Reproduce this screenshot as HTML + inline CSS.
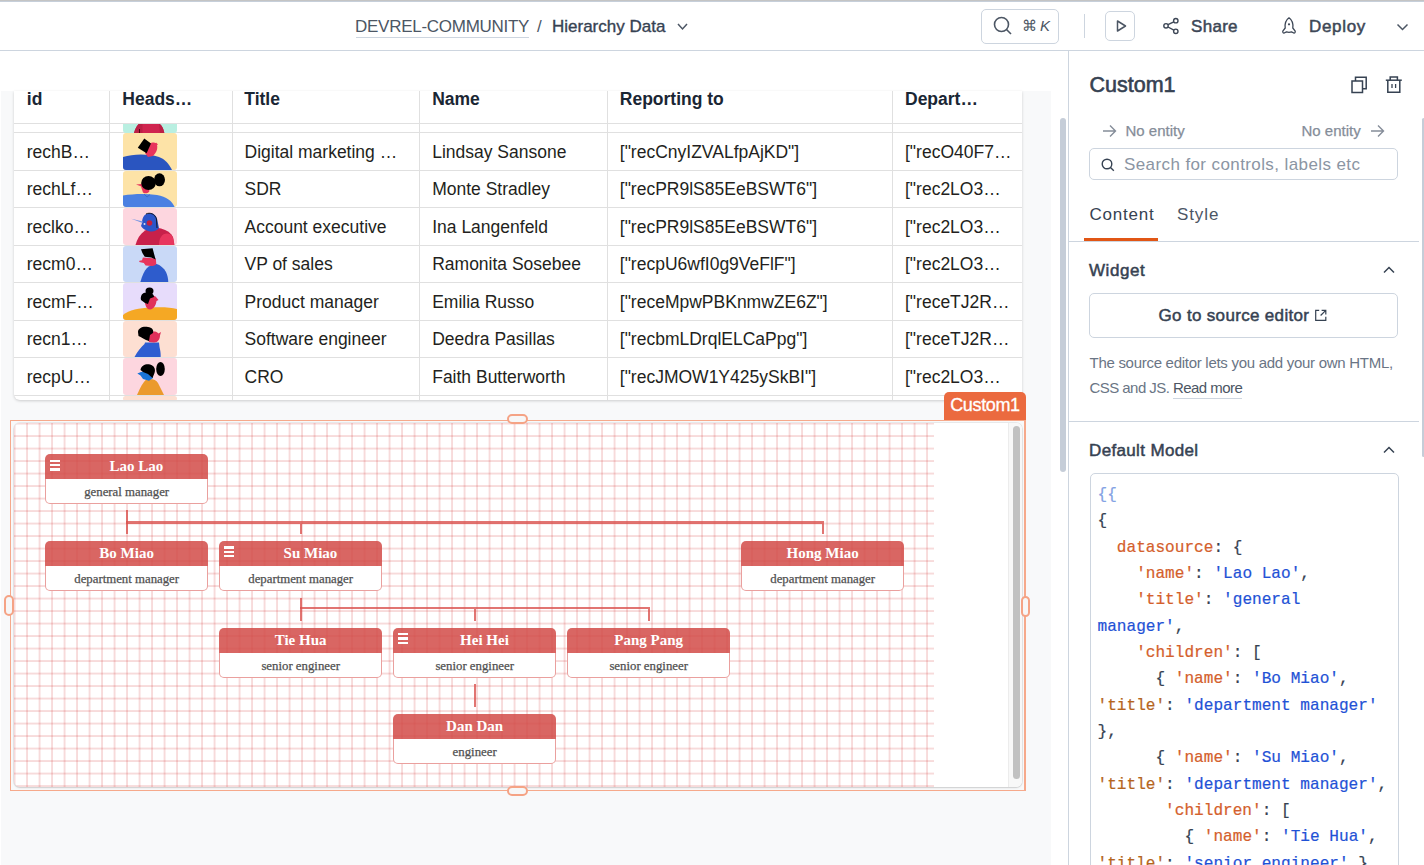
<!DOCTYPE html>
<html><head><meta charset="utf-8">
<style>
*{box-sizing:border-box;margin:0;padding:0}
html,body{width:1424px;height:865px;overflow:hidden;background:#fff;font-family:"Liberation Sans",sans-serif;}
.abs{position:absolute}
#topline{left:0;top:0;width:1424px;height:2px;background:linear-gradient(#c4c4c4 0,#c4c4c4 1px,#c6cfda 1px)}
#topbar{left:0;top:2px;width:1424px;height:49px;border-bottom:1px solid #cdd5df;background:#fff}
.tb{position:absolute;white-space:nowrap;color:#4c5664}
#canvas{left:1px;top:91px;width:1050px;height:774px;background:#f8f9fa}
#panel{left:1068px;top:51px;width:356px;height:814px;border-left:1px solid #cdd5df;background:#fff}
/* table */
#table{left:14px;top:91px;width:1008px;height:309px;background:#fff;border-radius:0 0 6px 6px;box-shadow:0 1px 3px rgba(0,0,0,.18);overflow:hidden}
.th{position:absolute;top:-2px;font-weight:bold;font-size:17.5px;color:#1a2634;white-space:nowrap}
.vl{position:absolute;top:0;width:1px;height:309px;background:#e0e0e0}
.hl{position:absolute;left:0;width:1008px;height:1px;background:#e0e0e0}
.td{position:absolute;font-size:17.5px;color:#231f20;white-space:nowrap}
.av{position:absolute;left:109px;width:54px;border-radius:3px;overflow:hidden}
.av svg,svg{display:block}

.sl{background:#f6a98b}
#wgt{left:14.4px;top:422.6px;width:1008px;height:364.6px;border-radius:6px;background:#fff;box-shadow:0 0 0 1px rgba(0,0,0,0.06),0 1px 2px rgba(0,0,0,0.12);overflow:hidden}
#grid{left:0;top:0.6px;width:920px;height:366px;background-image:linear-gradient(90deg,rgba(200,0,0,.14) 2px,rgba(0,0,0,0) 2px),linear-gradient(rgba(200,0,0,.14) 2px,rgba(0,0,0,0) 2px);background-size:12.5px 12.5px;background-position:-0.4px -0.4px}
#sbtrack{left:993.7px;top:0;width:14.3px;height:366px;background:#f8f8f8;border-left:1px solid #ececec}
#sbthumb{left:998.5px;top:3.6px;width:7.4px;height:352.6px;background:#c1c1c1;border-radius:4px}
.nd{position:absolute;width:162.5px;height:50px}
.nt{position:absolute;left:0;top:0;width:162.5px;height:25px;background:rgba(210,75,72,0.85);border-radius:5px 5px 0 0;color:#fff;font-family:"Liberation Serif",serif;font-weight:bold;font-size:15px;line-height:25px;text-align:center;white-space:nowrap}
.nt.m{padding-left:19.6px}
.nc{position:absolute;left:0;top:25px;width:162.5px;height:25px;background:#fff;border:1.5px solid rgba(217,83,79,0.55);border-top:none;border-radius:0 0 5px 5px;color:#333;font-family:"Liberation Serif",serif;font-size:12.8px;line-height:26.5px;text-align:center;white-space:nowrap;color:#505050;-webkit-text-stroke:0.25px #505050}
.mn{position:absolute;left:4.7px;top:5.5px;width:10.2px;height:11px}
.mn i{position:absolute;left:0;width:10.2px;height:2.2px;background:#fff}
.cl{position:absolute;background:rgba(217,83,79,0.8)}
.hdl{position:absolute;border:2px solid #f5a385;background:#f7f7f7;border-radius:6px}
.ctag{left:944px;top:391.8px;width:82px;height:28px;background:#eb6a3f;border-radius:5px 5px 0 0;color:#fff;font-size:18px;line-height:27.5px;text-align:center;letter-spacing:-0.35px;-webkit-text-stroke:0.3px #fff}

.pt{position:absolute;white-space:nowrap;color:#4c5664}

.code{position:absolute;left:1097.5px;top:481.9px;font-family:"Liberation Mono",monospace;font-size:16.1px;line-height:26.35px;white-space:pre;color:#364252;-webkit-text-stroke-width:0.2px}
.code .b{color:#84a2e4}.code .k{color:#d4602c}.code .t{color:#b5651d}.code .s{color:#1f52d6}
</style></head>
<body>
<div id="topline" class="abs"></div>

<div id="topbar" class="abs">
  <div class="tb" style="left:355px;top:15px;font-size:17px;color:#4c5664;letter-spacing:-0.27px">DEVREL-COMMUNITY</div>
  <div class="abs" style="left:356px;top:35px;width:173px;height:1px;background:#cdd5df"></div>
  <div class="tb" style="left:537px;top:15px;font-size:17px;color:#4c5664">/</div>
  <div class="tb" style="left:552px;top:15px;font-size:17px;color:#364252;-webkit-text-stroke:0.35px #364252">Hierarchy Data</div>
  <svg class="abs" style="left:675px;top:17.5px" width="14" height="14" viewBox="0 0 14 14"><path d="M3 4 L7.5 9 L12 4" fill="none" stroke="#4c5664" stroke-width="1.5"/></svg>
  <div class="abs" style="left:981px;top:7px;width:78px;height:35px;border:1px solid #cdd5df;border-radius:5px"></div>
  <svg class="abs" style="left:991px;top:12px" width="24" height="24" viewBox="0 0 24 24"><circle cx="10.5" cy="10.5" r="7" fill="none" stroke="#4c5664" stroke-width="1.6"/><path d="M15.5 15.5 L20 20" stroke="#4c5664" stroke-width="1.6"/></svg>
  <div class="tb" style="left:1022px;top:15px;font-size:15px;color:#4c5664">&#8984;</div>
  <div class="tb" style="left:1040px;top:15px;font-size:15px;font-style:italic;color:#4c5664">K</div>
  <div class="abs" style="left:1084px;top:12px;width:1px;height:24px;background:#cdd5df"></div>
  <div class="abs" style="left:1105px;top:9px;width:30px;height:30px;border:1px solid #cdd5df;border-radius:5px"></div>
  <svg class="abs" style="left:1113px;top:16px" width="16" height="16" viewBox="0 0 16 16"><path d="M4.5 3 L12.5 8 L4.5 13 Z" fill="none" stroke="#4c5664" stroke-width="1.5" stroke-linejoin="round"/></svg>
  <svg class="abs" style="left:1161px;top:14px" width="20" height="20" viewBox="0 0 20 20"><circle cx="14.8" cy="4.7" r="2.2" fill="none" stroke="#3d4756" stroke-width="1.4"/><circle cx="5" cy="9.8" r="2.2" fill="none" stroke="#3d4756" stroke-width="1.4"/><circle cx="14.8" cy="15.3" r="2.2" fill="none" stroke="#3d4756" stroke-width="1.4"/><path d="M7 8.7 L12.8 5.8 M7 11 L12.8 14.2" stroke="#3d4756" stroke-width="1.4"/></svg>
  <div class="tb" style="left:1191px;top:15px;font-size:17px;-webkit-text-stroke:0.5px #3d4756;letter-spacing:0.3px;color:#3d4756">Share</div>
  <svg class="abs" style="left:1280px;top:14px" width="18" height="20" viewBox="0 0 18 20"><path d="M9 1.8 C12.3 4.2 13.3 8 12.8 12 L15.2 15.2 C15.4 16.3 14.8 17.2 13.8 17 L11.5 15.9 C10 16.4 8 16.4 6.5 15.9 L4.2 17 C3.2 17.2 2.6 16.3 2.8 15.2 L5.2 12 C4.7 8 5.7 4.2 9 1.8 Z" fill="none" stroke="#3d4756" stroke-width="1.3" stroke-linejoin="round"/><circle cx="9" cy="8.3" r="1.1" fill="#3d4756"/></svg>
  <div class="tb" style="left:1309px;top:15px;font-size:17px;-webkit-text-stroke:0.5px #3d4756;letter-spacing:0.68px;color:#3d4756">Deploy</div>
  <svg class="abs" style="left:1395px;top:18.5px" width="14" height="14" viewBox="0 0 14 14"><path d="M2.5 3.5 L7.5 8.5 L12.5 3.5" fill="none" stroke="#4c5664" stroke-width="1.5"/></svg>
</div>

<div id="canvas" class="abs"></div>
<div id="table" class="abs">
<div class="vl" style="left:95.1px"></div>
<div class="vl" style="left:217.7px"></div>
<div class="vl" style="left:405.3px"></div>
<div class="vl" style="left:592.7px"></div>
<div class="vl" style="left:878.1px"></div>
<div class="hl" style="top:31.8px"></div>
<div class="hl" style="top:41.0px"></div>
<div class="hl" style="top:78.5px"></div>
<div class="hl" style="top:116.0px"></div>
<div class="hl" style="top:153.5px"></div>
<div class="hl" style="top:191.0px"></div>
<div class="hl" style="top:228.5px"></div>
<div class="hl" style="top:266.0px"></div>
<div class="hl" style="top:303.5px"></div>
<div class="th" style="left:12.8px">id</div>
<div class="th" style="left:108.3px">Heads…</div>
<div class="th" style="left:230.3px">Title</div>
<div class="th" style="left:418.2px">Name</div>
<div class="th" style="left:605.8px">Reporting to</div>
<div class="th" style="left:891.0px">Depart…</div>
<div class="td" style="left:12.8px;top:50.5px">rechB…</div>
<div class="td" style="left:230.5px;top:50.5px">Digital marketing …</div>
<div class="td" style="left:418.2px;top:50.5px">Lindsay Sansone</div>
<div class="td" style="left:605.8px;top:50.5px">["recCnyIZVALfpAjKD"]</div>
<div class="td" style="left:891.0px;top:50.5px">["recO40F7…</div>
<div class="td" style="left:12.8px;top:88.0px">rechLf…</div>
<div class="td" style="left:230.5px;top:88.0px">SDR</div>
<div class="td" style="left:418.2px;top:88.0px">Monte Stradley</div>
<div class="td" style="left:605.8px;top:88.0px">["recPR9lS85EeBSWT6"]</div>
<div class="td" style="left:891.0px;top:88.0px">["rec2LO3…</div>
<div class="td" style="left:12.8px;top:125.5px">reclko…</div>
<div class="td" style="left:230.5px;top:125.5px">Account executive</div>
<div class="td" style="left:418.2px;top:125.5px">Ina Langenfeld</div>
<div class="td" style="left:605.8px;top:125.5px">["recPR9lS85EeBSWT6"]</div>
<div class="td" style="left:891.0px;top:125.5px">["rec2LO3…</div>
<div class="td" style="left:12.8px;top:163.0px">recm0…</div>
<div class="td" style="left:230.5px;top:163.0px">VP of sales</div>
<div class="td" style="left:418.2px;top:163.0px">Ramonita Sosebee</div>
<div class="td" style="left:605.8px;top:163.0px">["recpU6wfI0g9VeFlF"]</div>
<div class="td" style="left:891.0px;top:163.0px">["rec2LO3…</div>
<div class="td" style="left:12.8px;top:200.5px">recmF…</div>
<div class="td" style="left:230.5px;top:200.5px">Product manager</div>
<div class="td" style="left:418.2px;top:200.5px">Emilia Russo</div>
<div class="td" style="left:605.8px;top:200.5px">["receMpwPBKnmwZE6Z"]</div>
<div class="td" style="left:891.0px;top:200.5px">["receTJ2R…</div>
<div class="td" style="left:12.8px;top:238.0px">recn1…</div>
<div class="td" style="left:230.5px;top:238.0px">Software engineer</div>
<div class="td" style="left:418.2px;top:238.0px">Deedra Pasillas</div>
<div class="td" style="left:605.8px;top:238.0px">["recbmLDrqlELCaPpg"]</div>
<div class="td" style="left:891.0px;top:238.0px">["receTJ2R…</div>
<div class="td" style="left:12.8px;top:275.5px">recpU…</div>
<div class="td" style="left:230.5px;top:275.5px">CRO</div>
<div class="td" style="left:418.2px;top:275.5px">Faith Butterworth</div>
<div class="td" style="left:605.8px;top:275.5px">["recJMOW1Y425ySkBI"]</div>
<div class="td" style="left:891.0px;top:275.5px">["rec2LO3…</div>
<div class="av" style="top:32.8px;height:8.9px;background:#b9efe1;border-radius:0 0 3px 3px" id="av0"><svg width="54" height="9" viewBox="0 0 54 9"><path d="M11 9 C12 5 14 1.5 15.7 0 L36.8 0 C39 1.5 40.5 5 41.3 9 Z" fill="#d0244f"/><path d="M11 9 C12 5 14 1.5 15.7 0 L19.5 0 L19.5 9 Z" fill="#bb1f45"/><path d="M36 0 L36.8 0 C39 1.5 40.5 5 41.3 9 L37 9 Z" fill="#bb1f45"/><path d="M16.5 5 L16.5 9" stroke="#300" stroke-width="0.8"/></svg></div>
<div class="av" style="top:42.2px;height:36.8px;background:#fde3a7" id="av1"><svg width="54" height="37" viewBox="0 0 54 37"><path d="M0 24 C10 21 24 20.5 36 24 C42 26 46 31 49 37 L0 37 Z" fill="#2a55c0"/><path d="M26 11 C30 9 33 9 34 12 C35 16 33 20 30 23 L25 24 L22 20 Z" fill="#e8345c"/><path d="M33 9.5 L35 11.5 L33 12.5 Z" fill="#e8345c"/><path d="M21.3 5.5 L28 10.5 L23.6 20.3 L14.8 14.8 Z" fill="#000"/></svg></div>
<div class="av" style="top:79.7px;height:36.8px;background:#fde3a7" id="av2"><svg width="54" height="37" viewBox="0 0 54 37"><path d="M0 24.5 C10 23 22 22.5 34 24 C44 25.5 50 31 52 37 L0 37 Z" fill="#4a80e2"/><path d="M21 23 L24 26 L27 23.5" stroke="#2f5fb8" stroke-width="0.6" fill="none"/><path d="M17.5 14 C18 12 21 11.5 24 12.5 L26.5 20 C25.5 22.5 22 23 20 21.5 L18.5 17 Z" fill="#e8345c"/><path d="M13 13.6 L19 13 L18.6 15.6 Z" fill="#e8345c"/><ellipse cx="36.5" cy="8.8" rx="5.5" ry="6.5" fill="#000"/><ellipse cx="25.5" cy="12" rx="7.3" ry="7" fill="#000"/></svg></div>
<div class="av" style="top:117.2px;height:36.8px;background:#fdd6df" id="av3"><svg width="54" height="37" viewBox="0 0 54 37"><path d="M12.5 37 C14 31 17 26 22 22.5 C27 20 33 19.5 38 20.5 C44 22 48 25 50 29 L51.5 37 Z" fill="#c8214a"/><path d="M36 37 C36 30 39 25.5 44 25.5 C49 25.5 51 30 51 37 Z" fill="#e8365e"/><path d="M19 15 C19 8.5 22.5 5 27 5 C31 5 34 8 34.5 13 L36 20 C34 23 30 24 26 23.2 C22 22.3 19.5 20.5 18 18 Z" fill="#2b55c9"/><path d="M8.3 10.8 L20 13.5 L19.5 15 Z" fill="#7193e2"/><path d="M23 6 C27 4 32 6 33.5 11 L34 20" stroke="#111" stroke-width="0.9" fill="none"/><circle cx="26.5" cy="15" r="2.8" fill="#c41f3f"/><circle cx="21.5" cy="16" r="1" fill="#dde"/></svg></div>
<div class="av" style="top:154.7px;height:36.8px;background:#c9d9f7" id="av4"><svg width="54" height="37" viewBox="0 0 54 37"><path d="M17.1 37 C19 30 21 25 24 22 C27 19.5 30 18 33.7 18 C37 19 41 22 43 26 C44.5 29 45.3 33 45.3 37 Z" fill="#2e5ccc"/><path d="M19.9 11.6 L32.8 12.5 L33.3 18 C32 19.5 30.5 20 29 19.9 L22.6 19.4 L20.8 17.1 L16.2 15.9 L16.4 14.8 L19 14.3 Z" fill="#e8345c"/><path d="M18 3.2 L29.6 2.3 L32.6 13.6 L28.2 11.6 L21.7 10.8 L19.4 6.9 Z" fill="#000"/></svg></div>
<div class="av" style="top:192.2px;height:36.8px;background:#e7dcfb" id="av5"><svg width="54" height="37" viewBox="0 0 54 37"><path d="M0 37 L0 32 C6 27 16 25 28 24.5 C40 24 48 24.5 54 26 L54 37 Z" fill="#f5a824"/><path d="M23 14 C26 12 31 12 33 14 L35.5 17 L33.5 18 C33 22 31 26 27 26.5 C24 26.5 22.5 23 22 20 Z" fill="#e0305a"/><ellipse cx="26.5" cy="8" rx="4" ry="3.5" fill="#000"/><path d="M18 17 C17 12 20 9 24 9.5 C28 9.5 31 11 31 14 L27 15.5 L25 21 L22 20 Z" fill="#000"/></svg></div>
<div class="av" style="top:229.7px;height:36.8px;background:#fddfd2" id="av6"><svg width="54" height="37" viewBox="0 0 54 37"><path d="M11 37 C14 31 18 26 21.5 23 L22 21.5 L36 21.5 L36.5 26 C37.5 30 38 34 37.5 37 Z" fill="#2f5ed1"/><path d="M27 11 C30 10 34 10 35.5 12.5 L38 11 L37 14.5 C37 18 35 21.5 31 21.5 L26 21 L24 16 Z" fill="#e0305a"/><path d="M15 11 C15 7 20 5 25 6 C29 6.5 31 9 30 12 L27 14 L26 20 C22 19 18 16 15.5 15 Z" fill="#000"/></svg></div>
<div class="av" style="top:267.2px;height:36.8px;background:#fdd6df" id="av7"><svg width="54" height="37" viewBox="0 0 54 37"><path d="M14 37 C17 30 20 24 23.5 21.5 C28 20 33 21.5 35 25 L41 37 Z" fill="#eb9a2c"/><path d="M18 14 L27 12 L30 20 L26 22.8 L20 21 L17.5 17.5 L14.3 15.5 Z" fill="#1a74d8"/><path d="M17.5 12 C18 7.5 23 5.5 27 6.5 C31 7.5 33 11 31.5 15 L29.5 20 L25 16 L20 14 Z" fill="#000"/><ellipse cx="37.5" cy="11" rx="4.3" ry="7" fill="#000"/></svg></div>
<div class="av" style="top:304.7px;height:5.0px;background:#fddfd2" id="av8"></div>
</div>
<div class="abs sl" style="left:9.5px;top:419.5px;width:1016px;height:1.5px"></div><div class="abs sl" style="left:9.5px;top:789.8px;width:1016px;height:1.5px"></div><div class="abs sl" style="left:9.5px;top:419.5px;width:1.5px;height:371.8px"></div><div class="abs sl" style="left:1024px;top:419.5px;width:1.5px;height:371.8px"></div>
<div id="wgt" class="abs">
<div id="grid" class="abs"></div>
<div class="cl" style="left:111.15px;top:87.80px;width:2.2px;height:24.00px"></div>
<div class="cl" style="left:111.15px;top:98.80px;width:698.20px;height:2.2px"></div>
<div class="cl" style="left:285.15px;top:101.00px;width:2.2px;height:10.80px"></div>
<div class="cl" style="left:807.15px;top:101.00px;width:2.2px;height:10.80px"></div>
<div class="cl" style="left:285.15px;top:175.00px;width:2.2px;height:23.70px"></div>
<div class="cl" style="left:285.15px;top:184.60px;width:350.20px;height:2.2px"></div>
<div class="cl" style="left:459.15px;top:186.80px;width:2.2px;height:11.90px"></div>
<div class="cl" style="left:633.15px;top:186.80px;width:2.2px;height:11.90px"></div>
<div class="cl" style="left:459.15px;top:261.10px;width:2.2px;height:23.50px"></div>
<div class="nd" style="left:31.00px;top:31.80px"><div class="nt m"><div class="mn"><i style="top:0"></i><i style="top:4.3px"></i><i style="top:8.6px"></i></div>Lao Lao</div><div class="nc">general manager</div></div>
<div class="nd" style="left:31.00px;top:118.40px"><div class="nt">Bo Miao</div><div class="nc">department manager</div></div>
<div class="nd" style="left:205.00px;top:118.40px"><div class="nt m"><div class="mn"><i style="top:0"></i><i style="top:4.3px"></i><i style="top:8.6px"></i></div>Su Miao</div><div class="nc">department manager</div></div>
<div class="nd" style="left:727.00px;top:118.40px"><div class="nt">Hong Miao</div><div class="nc">department manager</div></div>
<div class="nd" style="left:205.00px;top:205.00px"><div class="nt">Tie Hua</div><div class="nc">senior engineer</div></div>
<div class="nd" style="left:379.00px;top:205.00px"><div class="nt m"><div class="mn"><i style="top:0"></i><i style="top:4.3px"></i><i style="top:8.6px"></i></div>Hei Hei</div><div class="nc">senior engineer</div></div>
<div class="nd" style="left:553.00px;top:205.00px"><div class="nt">Pang Pang</div><div class="nc">senior engineer</div></div>
<div class="nd" style="left:379.00px;top:291.40px"><div class="nt">Dan Dan</div><div class="nc">engineer</div></div>
<div id="sbtrack" class="abs"></div><div id="sbthumb" class="abs"></div>
</div>
<div class="hdl" style="left:507px;top:413.8px;width:21px;height:10px"></div>
<div class="hdl" style="left:507px;top:785.5px;width:21px;height:10px"></div>
<div class="hdl" style="left:3.8px;top:595px;width:10px;height:21px"></div>
<div class="hdl" style="left:1021px;top:596px;width:9px;height:20.7px"></div>
<div class="abs ctag">Custom1</div>

<div class="abs" style="left:1051px;top:51px;width:17px;height:814px;background:#fff"></div>
<div class="abs" style="left:1060.2px;top:118px;width:5.6px;height:353.5px;background:#c5cdd8;border-radius:3px"></div>
<div id="panel" class="abs">
  <div class="pt" style="left:20.5px;top:22px;font-size:21.5px;color:#364252;-webkit-text-stroke:0.6px #364252;letter-spacing:0px">Custom1</div>
  <svg class="abs" style="left:282px;top:25px" width="17" height="18" viewBox="0 0 17 18"><rect x="1" y="5" width="10.5" height="11.5" fill="none" stroke="#364252" stroke-width="1.5"/><path d="M4.5 5 V1.2 H15.2 V12.8 H11.5" fill="none" stroke="#364252" stroke-width="1.5"/></svg>
  <svg class="abs" style="left:316px;top:25px" width="18" height="18" viewBox="0 0 18 18"><path d="M0.8 4.2 H16.8" stroke="#364252" stroke-width="1.5"/><path d="M5.2 4.2 V1 H12.4 V4.2" fill="none" stroke="#364252" stroke-width="1.5"/><path d="M2.8 4.2 V16.3 H14.8 V4.2" fill="none" stroke="#364252" stroke-width="1.5"/><path d="M7 8 V12 M10.6 8 V12" stroke="#364252" stroke-width="1.3"/></svg>
  <svg class="abs" style="left:33px;top:73px" width="15" height="14" viewBox="0 0 15 14"><path d="M1 7 H13.5 M8 1.5 L13.5 7 L8 12.5" fill="none" stroke="#858d99" stroke-width="1.4"/></svg>
  <div class="pt" style="left:56.5px;top:71px;font-size:15px;color:#858d99;-webkit-text-stroke:0.25px #858d99">No entity</div>
  <div class="pt" style="left:232.5px;top:71px;font-size:15px;color:#858d99;-webkit-text-stroke:0.25px #858d99">No entity</div>
  <svg class="abs" style="left:301px;top:73px" width="15" height="14" viewBox="0 0 15 14"><path d="M1 7 H13.5 M8 1.5 L13.5 7 L8 12.5" fill="none" stroke="#858d99" stroke-width="1.4"/></svg>
  <div class="abs" style="left:20px;top:96.8px;width:309px;height:32.5px;border:1px solid #cdd5df;border-radius:5px"></div>
  <svg class="abs" style="left:32px;top:107px" width="14" height="14" viewBox="0 0 14 14"><circle cx="6" cy="6" r="4.8" fill="none" stroke="#364252" stroke-width="1.4"/><path d="M9.5 9.5 L12.8 12.8" stroke="#364252" stroke-width="1.4"/></svg>
  <div class="pt" style="left:55px;top:104px;font-size:17px;letter-spacing:0.4px;color:#8b95a3">Search for controls, labels etc</div>
  <div class="pt" style="left:20.5px;top:153.5px;font-size:17px;letter-spacing:0.8px;color:#364252">Content</div>
  <div class="pt" style="left:108px;top:153.5px;font-size:17px;letter-spacing:0.9px;color:#4c5664">Style</div>
  <div class="abs" style="left:15px;top:187px;width:74px;height:3px;background:#e15615"></div>
  <div class="abs" style="left:0;top:190px;width:350px;height:1px;background:#cdd5df"></div>

  <div class="pt" style="left:20px;top:209.5px;font-size:17px;-webkit-text-stroke:0.5px #364252;letter-spacing:0.55px;color:#364252">Widget</div>
  <svg class="abs" style="left:313px;top:213px" width="14" height="12" viewBox="0 0 14 12"><path d="M2 8.5 L7 3.5 L12 8.5" fill="none" stroke="#364252" stroke-width="1.5"/></svg>
  <div class="abs" style="left:20px;top:242px;width:309px;height:45px;border:1px solid #cdd5df;border-radius:5px"></div>
  <div class="pt" style="left:89.5px;top:254.5px;font-size:17px;-webkit-text-stroke:0.5px #364252;letter-spacing:0.33px;color:#364252">Go to source editor</div>
  <svg class="abs" style="left:245px;top:257px" width="14" height="14" viewBox="0 0 14 14"><path d="M5.2 2.3 H1.7 V12.3 H11.8 V8.8 M7.6 2.3 H11.8 V6.4 M11.8 2.3 L6.6 7.5" fill="none" stroke="#364252" stroke-width="1.2"/></svg>
  <div class="pt" style="left:20.5px;top:300.3px;font-size:15px;line-height:24.4px;color:#6a7585;letter-spacing:-0.28px">The source editor lets you add your own HTML,<br><span style="letter-spacing:-0.55px">CSS and JS. <span style="color:#4c5664;border-bottom:1px solid #cdd5df;padding-bottom:2px">Read more</span></span></div>
  <div class="abs" style="left:0;top:370px;width:350px;height:1px;background:#cdd5df"></div>
  <div class="pt" style="left:20px;top:390px;font-size:17px;-webkit-text-stroke:0.5px #364252;color:#364252;letter-spacing:0.35px">Default Model</div>
  <svg class="abs" style="left:313px;top:393px" width="14" height="12" viewBox="0 0 14 12"><path d="M2 8.5 L7 3.5 L12 8.5" fill="none" stroke="#364252" stroke-width="1.5"/></svg>
  <div class="abs" style="left:21px;top:422px;width:309px;height:420px;border:1px solid #cdd5df;border-radius:5px"></div>
  <div class="abs" style="left:353px;top:67px;width:3px;height:339px;background:#c5cdd8;border-radius:2px"></div>
</div>

<div class="code"><span class="b">{{</span>
{
  <span class="k">datasource</span>: {
    <span class="k">'name'</span>: <span class="s">'Lao Lao'</span>,
    <span class="k">'title'</span>: <span class="s">'general</span>
<span class="s">manager'</span>,
    <span class="k">'children'</span>: [
      { <span class="k">'name'</span>: <span class="s">'Bo Miao'</span>,
<span class="t">'title'</span>: <span class="s">'department manager'</span>
},
      { <span class="k">'name'</span>: <span class="s">'Su Miao'</span>,
<span class="t">'title'</span>: <span class="s">'department manager'</span>,
       <span class="k">'children'</span>: [
         { <span class="k">'name'</span>: <span class="s">'Tie Hua'</span>,
<span class="t">'title'</span>: <span class="s">'senior engineer'</span> },</div>
</body></html>
